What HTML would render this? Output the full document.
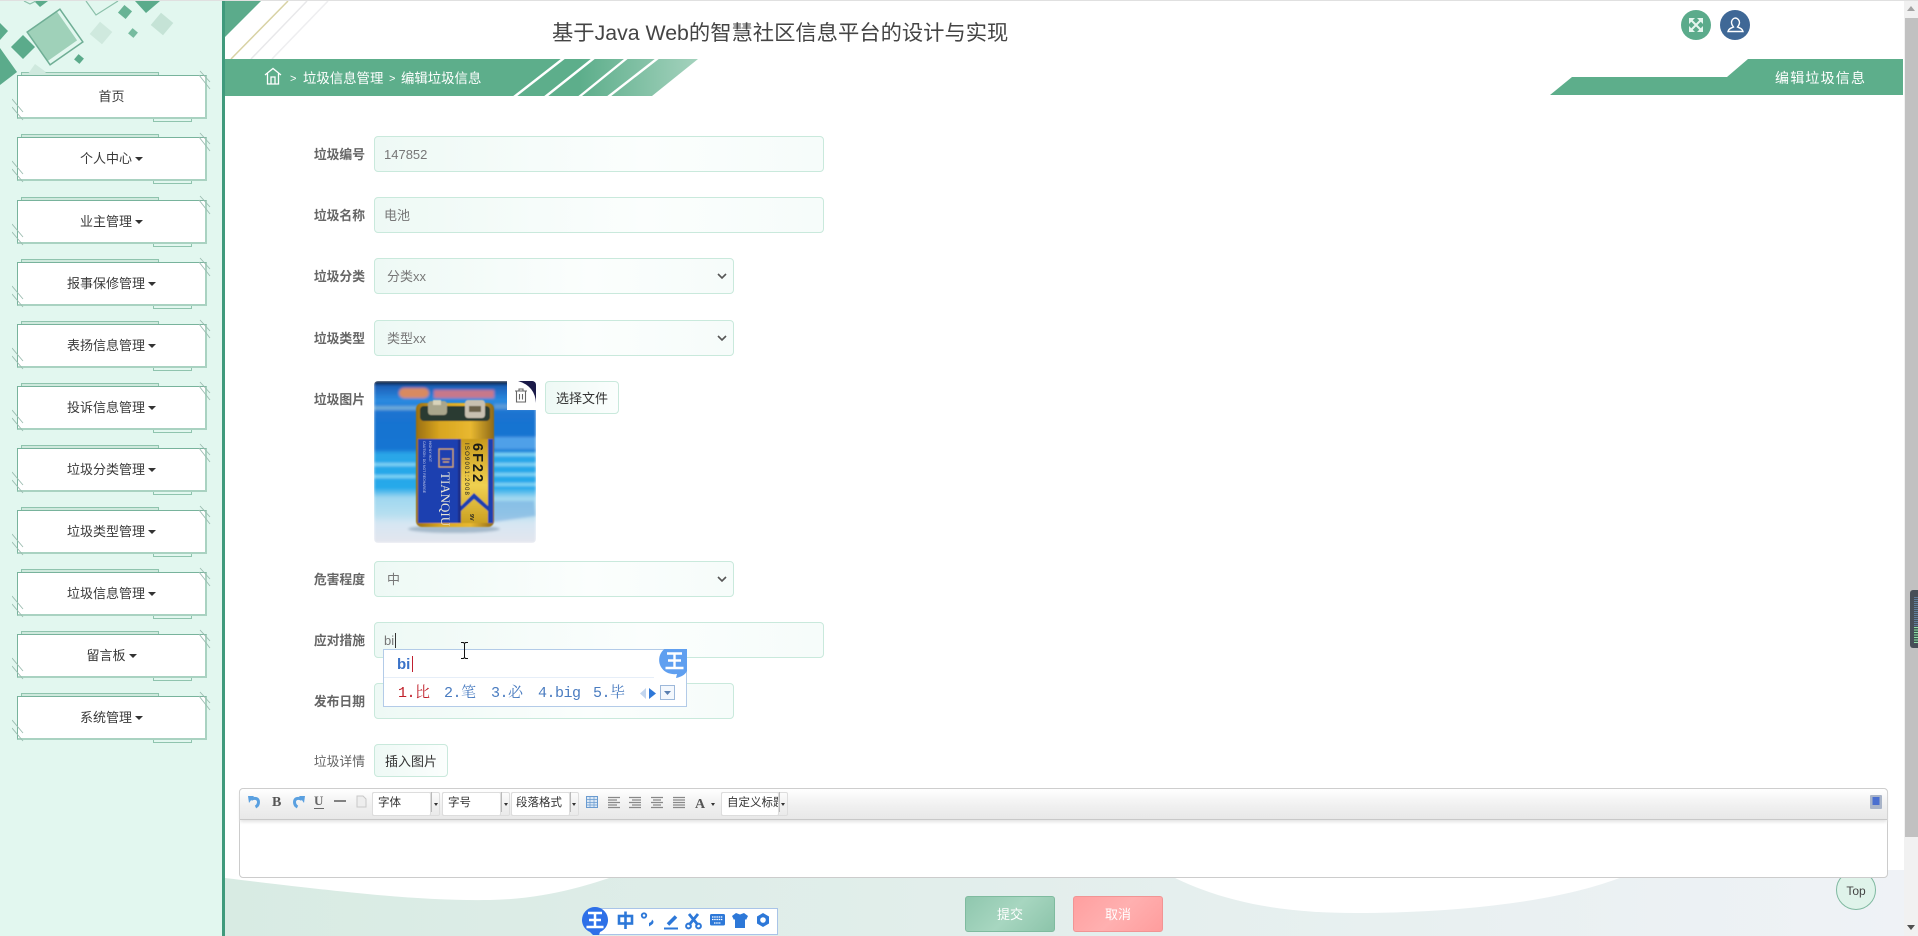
<!DOCTYPE html>
<html lang="zh-CN"><head><meta charset="utf-8"><title>编辑垃圾信息</title>
<style>
*{box-sizing:border-box}
html,body{margin:0;padding:0;width:1918px;height:936px;overflow:hidden;background:#fff}
body{position:relative;font-family:"Liberation Sans","Noto Sans CJK SC",sans-serif;font-size:13px;color:#555}
.a{position:absolute}
#side{left:0;top:0;width:225px;height:936px;background:#e2f7ef;border-right:3px solid #3f9a7c}
.m{position:absolute;left:17px;width:190px;height:44px;background:#fff;border:1px solid #78b39c;border-right:2px solid #a9d2c1;border-bottom:2px solid #a9d2c1;text-align:center;line-height:41px;color:#3a3a3a;font-size:13px;z-index:2}
.mt{position:absolute;left:21px;width:138px;height:4px;border:1px solid #8fc4ae;border-bottom:0;background:#cfe9dd}
.mb{position:absolute;left:153px;width:39px;height:4px;border:1px solid #8fc4ae;border-top:0}
.h{position:absolute;left:12px;width:200px;height:54px;z-index:3;pointer-events:none}
.c{display:inline-block;width:0;height:0;border:4px solid transparent;border-top-color:#333;border-bottom:0;margin-left:3px;vertical-align:2px}
.l{position:absolute;left:300px;width:65px;text-align:right;font-weight:bold;color:#666;line-height:20px;font-size:12.8px}
.i{position:absolute;left:374px;height:36px;border:1px solid #c9e9dc;border-radius:4px;background:linear-gradient(90deg,#eef9f5,#fbfefd 60%,#f6fcfa);color:#777;font-size:13px;line-height:36px;padding-left:9px}
.b{position:absolute;left:374px;width:74px;height:33px;border:1px solid #c9e9dc;border-radius:4px;background:linear-gradient(90deg,#eef9f5,#fbfefd);color:#333;text-align:center;line-height:33px;font-size:13px}
.ch{position:absolute;right:6px;top:14px}
.sel{position:absolute;top:792px;height:24px;border:1px solid #ddd;background:#fff;color:#333;font-size:11.5px;line-height:21px;padding-left:5px;overflow:hidden;white-space:nowrap;border-radius:2px}
.tri{position:absolute;width:0;height:0;border:2.5px solid transparent;border-top:3px solid #333;border-bottom:0}
.cand{position:absolute;top:684px;font-family:"Liberation Mono","Noto Serif CJK SC",monospace;font-size:15px;color:#4a7cc0;line-height:20px;white-space:nowrap;z-index:12;letter-spacing:-.5px}
</style></head><body>
<div class="a" style="left:0;top:0;width:1918px;height:1px;background:#e0e0e0;z-index:20"></div>

<div class="a" id="side"></div>
<svg class="a" style="left:0;top:0;z-index:1" width="222" height="90" viewBox="0 0 222 90">
<g fill="#5bab8b">
<polygon points="0,48 17,72 0,85"/><polygon points="0,23 8,31 0,40"/>
<polygon points="135,1 160,1 146,13"/><polygon points="34,1 48,1 40,7"/>
<rect x="-8.500" y="-8.500" width="17" height="17" transform="translate(23,47) rotate(45)"/>
<rect x="-5" y="-5" width="10" height="10" transform="translate(125,12) rotate(40)" opacity=".9"/>
<rect x="-3.500" y="-3.500" width="7" height="7" transform="translate(79,59) rotate(40)"/>
<rect x="-3.500" y="-3.500" width="7" height="7" transform="translate(133,33) rotate(40)" opacity=".8"/>
</g>
<rect x="-18" y="-18" width="36" height="36" transform="translate(52,36) rotate(55)" fill="#9fd1b9"/>
<rect x="-20" y="-20" width="40" height="40" transform="translate(55,37) rotate(55)" fill="none" stroke="#6fae95" stroke-width="1.500"/>
<rect x="-8" y="-8" width="16" height="16" transform="translate(101,33) rotate(40)" fill="#cfe9de"/>
<rect x="-8" y="-8" width="16" height="16" transform="translate(162,24) rotate(40)" fill="#c5e3d6"/>
<polygon points="25,78 35,64 46,72 40,78" fill="#cfe9de"/>
<polyline points="86,1 96,15 118,1" fill="none" stroke="#8bc0aa" stroke-width="1.200"/>
<polyline points="24,1 30,4 36,1" fill="none" stroke="#8bc0aa" stroke-width="1.200"/>
</svg>

<svg width="0" height="0" style="position:absolute"><defs><g id="hh" stroke="#9bbcb0" stroke-width=".9" fill="none">
<path d="M188,2 L198,13M187,6 L198,20"/><path d="M0,30 L11,43M0,38 L11,51"/></g></defs></svg>

<div class="mt" style="top:72px"></div><div class="m" style="top:75px">首页</div><div class="mb" style="top:118px"></div><svg class="h" style="top:69px"><use href="#hh"/></svg>
<div class="mt" style="top:134px"></div><div class="m" style="top:137px">个人中心<span class="c"></span></div><div class="mb" style="top:180px"></div><svg class="h" style="top:131px"><use href="#hh"/></svg>
<div class="mt" style="top:197px"></div><div class="m" style="top:200px">业主管理<span class="c"></span></div><div class="mb" style="top:243px"></div><svg class="h" style="top:194px"><use href="#hh"/></svg>
<div class="mt" style="top:259px"></div><div class="m" style="top:262px">报事保修管理<span class="c"></span></div><div class="mb" style="top:305px"></div><svg class="h" style="top:256px"><use href="#hh"/></svg>
<div class="mt" style="top:321px"></div><div class="m" style="top:324px">表扬信息管理<span class="c"></span></div><div class="mb" style="top:367px"></div><svg class="h" style="top:318px"><use href="#hh"/></svg>
<div class="mt" style="top:383px"></div><div class="m" style="top:386px">投诉信息管理<span class="c"></span></div><div class="mb" style="top:429px"></div><svg class="h" style="top:380px"><use href="#hh"/></svg>
<div class="mt" style="top:445px"></div><div class="m" style="top:448px">垃圾分类管理<span class="c"></span></div><div class="mb" style="top:491px"></div><svg class="h" style="top:442px"><use href="#hh"/></svg>
<div class="mt" style="top:507px"></div><div class="m" style="top:510px">垃圾类型管理<span class="c"></span></div><div class="mb" style="top:553px"></div><svg class="h" style="top:504px"><use href="#hh"/></svg>
<div class="mt" style="top:569px"></div><div class="m" style="top:572px">垃圾信息管理<span class="c"></span></div><div class="mb" style="top:615px"></div><svg class="h" style="top:566px"><use href="#hh"/></svg>
<div class="mt" style="top:631px"></div><div class="m" style="top:634px">留言板<span class="c"></span></div><div class="mb" style="top:677px"></div><svg class="h" style="top:628px"><use href="#hh"/></svg>
<div class="mt" style="top:693px"></div><div class="m" style="top:696px">系统管理<span class="c"></span></div><div class="mb" style="top:739px"></div><svg class="h" style="top:690px"><use href="#hh"/></svg>

<!-- header art -->
<svg class="a" style="left:225px;top:0" width="500" height="100" viewBox="225 0 500 100">
<defs><linearGradient id="bg1" x1="0" x2="1"><stop offset="0" stop-color="#5dae8b"/><stop offset=".75" stop-color="#5dae8b"/><stop offset="1" stop-color="#a4d2bd"/></linearGradient></defs>
<polygon points="225,1 261,1 225,37" fill="#5bab8b"/>
<path d="M288,1 L231,59" stroke="#d8d2a4" stroke-width="1.500"/>
<path d="M307,1 L251,59" stroke="#e8e8ea" stroke-width="1.500"/>
<path d="M328,1 L272,59" stroke="#eeeef0" stroke-width="1.500"/>
<polygon points="225,59 698,59 652,96 225,96" fill="url(#bg1)"/>
<g stroke="#fff" stroke-width="2.400"><path d="M564,58 L514,97M594,58 L545,97M627,58 L579,97M658,58 L608,97"/></g>
<g fill="none" stroke="#fff" stroke-width="1.300"><path d="M265,75 L273,68.500 L281,75M267.500,73.500 V84 H278.500 V73.500M271,84 V77 H275 V84"/></g>
</svg>
<div class="a" style="left:290px;top:69px;color:#fff;font-size:11px;line-height:20px">&gt;</div>
<div class="a" style="left:303px;top:69px;color:#fff;font-size:13.4px;line-height:20px;white-space:nowrap">垃圾信息管理</div>
<div class="a" style="left:389px;top:69px;color:#fff;font-size:11px;line-height:20px">&gt;</div>
<div class="a" style="left:401px;top:69px;color:#fff;font-size:13.4px;line-height:20px;white-space:nowrap">编辑垃圾信息</div>
<div class="a" style="left:552px;top:17px;font-size:21.3px;line-height:32px;color:#444;white-space:nowrap">基于Java Web的智慧社区信息平台的设计与实现</div>

<svg class="a" style="left:1680px;top:9px" width="72" height="32" viewBox="0 0 72 32">
<circle cx="16" cy="16" r="15" fill="#5bab8b"/><circle cx="55" cy="16" r="15" fill="#3f6896"/>
<g stroke="#e4f5ee" stroke-width="2" fill="none"><path d="M11,11 L21,21M21,11 L11,21"/></g>
<g fill="#e4f5ee"><polygon points="9,9 15,9 9,15"/><polygon points="23,9 17,9 23,15"/><polygon points="9,23 15,23 9,17"/><polygon points="23,23 17,23 23,17"/></g>
<g stroke="#fff" stroke-width="1.400" fill="none"><path d="M55,9 a4.500,4.500 0 0 1 4.500,4.500 c0,2 -1,3.200 -2,4.500 c2,1 5,1.500 5.500,4.500 H48 c.5,-3 3.500,-3.500 5.500,-4.500 c-1,-1.300 -2,-2.500 -2,-4.500 A4.500,4.500 0 0 1 55,9z"/></g>
</svg>
<svg class="a" style="left:1550px;top:59px" width="354" height="37" viewBox="1550 59 354 37"><polygon points="1550,95 1572,77 1727,77 1748,59 1903,59 1903,95" fill="#5dae8b"/></svg>
<div class="a" style="left:1775px;top:67px;color:#fff;font-size:14px;line-height:22px;letter-spacing:1.200px;white-space:nowrap;width:100px">编辑垃圾信息</div>

<!-- form -->
<div class="l" style="top:145px">垃圾编号</div><div class="i" style="top:136px;width:450px">147852</div>
<div class="l" style="top:206px">垃圾名称</div><div class="i" style="top:197px;width:450px">电池</div>
<div class="l" style="top:267px">垃圾分类</div><div class="i" style="top:258px;width:360px;padding-left:12px">分类xx<svg class="ch" width="10" height="7"><path d="M1,1 L5,5 L9,1" fill="none" stroke="#555" stroke-width="1.600"/></svg></div>
<div class="l" style="top:329px">垃圾类型</div><div class="i" style="top:320px;width:360px;padding-left:12px">类型xx<svg class="ch" width="10" height="7"><path d="M1,1 L5,5 L9,1" fill="none" stroke="#555" stroke-width="1.600"/></svg></div>
<div class="l" style="top:390px">垃圾图片</div>

<svg class="a" style="left:374px;top:381px;border-radius:4px" width="162" height="162" viewBox="0 0 162 162">
<defs>
<filter id="bl" x="-10%" y="-10%" width="120%" height="120%"><feGaussianBlur stdDeviation="1.400"/></filter>
<filter id="bs"><feGaussianBlur stdDeviation=".5"/></filter>
<filter id="bt"><feGaussianBlur stdDeviation=".25"/></filter>
<linearGradient id="bgv" x1="0" y1="0" x2="0" y2="1"><stop offset="0" stop-color="#000"/><stop offset=".03" stop-color="#1c5fb8"/><stop offset=".12" stop-color="#2b8be0"/><stop offset=".2" stop-color="#1a73d0"/><stop offset=".42" stop-color="#1774d2"/><stop offset=".45" stop-color="#29a6e8"/><stop offset=".66" stop-color="#26a9ea"/><stop offset=".72" stop-color="#9fd7f0"/><stop offset=".82" stop-color="#b5dff0"/><stop offset=".88" stop-color="#d6e6f3"/><stop offset="1" stop-color="#e4e6ee"/></linearGradient>
<linearGradient id="gold" x1="0" x2="1"><stop offset="0" stop-color="#9a6f10"/><stop offset=".3" stop-color="#d8a520"/><stop offset=".7" stop-color="#e8b830"/><stop offset="1" stop-color="#8f6a18"/></linearGradient>
<linearGradient id="gs" x1="0" y1="0" x2="0" y2="1"><stop offset="0" stop-color="#c89a1c"/><stop offset=".55" stop-color="#f0d050"/><stop offset="1" stop-color="#caa022"/></linearGradient>
</defs>
<g filter="url(#bl)">
<rect width="162" height="162" fill="url(#bgv)"/>
<rect x="25" y="7" width="30" height="10" rx="5" fill="#d98a60"/><rect x="60" y="9" width="60" height="8" fill="#c7788a"/>
<rect x="0" y="25" width="50" height="4" fill="#6aa8d8"/><rect x="120" y="23" width="42" height="5" fill="#5a9ad8"/>
<rect x="120" y="56" width="42" height="12" fill="#4fa0e8"/>
<g fill="#7fd4f4"><rect x="120" y="72" width="42" height="3"/><rect x="120" y="82" width="42" height="3"/><rect x="120" y="92" width="42" height="3"/><rect x="120" y="102" width="42" height="3"/><rect x="0" y="82" width="42" height="3"/><rect x="0" y="94" width="42" height="3"/></g>
<polygon points="113,120 160,120 162,135 113,142" fill="#6aa5dc" opacity=".5"/>
<ellipse cx="80" cy="148" rx="46" ry="4" fill="#8ea7bb" opacity=".7"/>
</g>
<g filter="url(#bs)">
<rect x="42" y="22" width="78" height="124" rx="6" fill="url(#gold)"/>
<rect x="46" y="25" width="70" height="15" rx="4" fill="#2b3a30"/>
<rect x="54" y="20" width="19" height="14" rx="3" fill="#a9a68c"/><rect x="59" y="19" width="8" height="5" fill="#d9d3b9"/>
<rect x="91" y="19" width="20" height="18" rx="3" fill="#c8c0b0"/><rect x="95" y="25" width="12" height="6" fill="#6a6048"/>
<rect x="44" y="58" width="40" height="84" fill="#1a3fb0"/>
<rect x="84" y="58" width="3" height="84" fill="#1d2f88"/>
<rect x="87" y="58" width="27" height="84" fill="url(#gs)"/>
<rect x="114" y="58" width="5" height="84" fill="#1a3fb0"/>
<polygon points="87,130 100,118 114,130 114,125 100,112 87,125" fill="#1a3fb0"/>
<rect x="65" y="68" width="14" height="18" fill="#1a3fb0" stroke="#d8b040" stroke-width="1"/>
<path d="M68,78 H76M69,81 H75" stroke="#d8b040"/>
</g>
<g filter="url(#bt)">
<text transform="translate(99,62) rotate(90)" font-family="Liberation Sans,sans-serif" font-weight="bold" font-size="14.500" fill="#1a1a18" letter-spacing="2">6F22</text>
<text transform="translate(91,62) rotate(90)" font-family="Liberation Sans,sans-serif" font-size="6" fill="#222" letter-spacing="1.200">ISO9001:2008</text>
<text transform="translate(67,91) rotate(90)" font-family="Liberation Serif,serif" font-size="13" fill="#e9e6d6">TIANQIU</text>
<text transform="translate(49,60) rotate(90)" font-family="Liberation Sans,sans-serif" font-size="3.500" fill="#c0c8e8">CAUTION: DO NOT RECHARGE</text>
<text transform="translate(55,60) rotate(90)" font-family="Liberation Sans,sans-serif" font-size="3.500" fill="#c0c8e8">HIGHLY HOT</text>
<text transform="translate(96,133) rotate(90)" font-family="Liberation Sans,sans-serif" font-size="5.500" font-weight="bold" fill="#222">9V</text>
</g>
<path d="M133,0 H162 V29 H133z" fill="#1a1a48"/>
<path d="M133,0 H144 Q161,5 162,22 V29 H133z" fill="#fff"/>
</svg>
<svg class="a" style="left:514px;top:388px" width="14" height="15" viewBox="0 0 14 15"><g fill="none" stroke="#666" stroke-width="1.100"><path d="M1,3 H13M5,3 V1 H9 V3M2.500,3 V14 H11.500 V3M5.500,6 V11.500M8.500,6 V11.500"/></g></svg>
<div class="b" style="left:545px;top:381px">选择文件</div>

<div class="l" style="top:570px">危害程度</div><div class="i" style="top:561px;width:360px;padding-left:12px">中<svg class="ch" width="10" height="7"><path d="M1,1 L5,5 L9,1" fill="none" stroke="#555" stroke-width="1.600"/></svg></div>
<div class="l" style="top:631px">应对措施</div><div class="i" style="top:622px;width:450px">bi<span style="display:inline-block;width:1px;height:15px;background:#333;vertical-align:-3px;margin-left:1px"></span></div>
<div class="l" style="top:692px">发布日期</div><div class="i" style="top:683px;width:360px"></div>
<div class="l" style="top:752px;font-weight:normal">垃圾详情</div><div class="b" style="top:744px">插入图片</div>

<!-- footer bg -->
<svg class="a" style="left:225px;top:870px" width="1679" height="66" viewBox="225 870 1679 66">
<defs><linearGradient id="fb" x1="0" x2="1"><stop offset="0" stop-color="#d8ebe3"/><stop offset="1" stop-color="#eff2f6"/></linearGradient></defs>
<rect x="225" y="870" width="1679" height="66" fill="url(#fb)"/>
<path d="M225,870 V878 C350,893 420,901 490,900 C540,899 580,888 612,877 V870Z" fill="#fff"/>
<path d="M1173,877 C1230,905 1290,913 1355,913 C1440,913 1550,905 1622,877Z" fill="#fff"/>
</svg>

<!-- top button -->
<div class="a" style="left:1836px;top:870px;width:40px;height:40px;border-radius:50%;background:#dff3ea;border:1px solid #7fb9a0;text-align:center;line-height:41px;font-size:12px;color:#444">Top</div>

<!-- editor -->
<div class="a" style="left:239px;top:788px;width:1649px;height:90px;background:#fff;border:1px solid #ccc;border-radius:4px;z-index:5">
<div style="height:31px;background:linear-gradient(180deg,#fff,#f0f0f0 55%,#e8e8e8);border-bottom:1px solid #c8c8c8;box-shadow:0 2px 3px #e4e4e4;border-radius:4px 4px 0 0"></div></div>
<svg class="a" style="left:239px;top:788px;z-index:6" width="130" height="31" viewBox="239 788 130 31">
<g fill="none" stroke="#5aa0e0" stroke-width="3"><path d="M251,799.500 c3,-2 7.500,-1.500 7.500,2.500 c0,2 -1,4 -3,5"/></g><polygon points="248,796 254,796 249,803" fill="#5aa0e0"/>
<text x="272" y="806" font-family="Liberation Serif,serif" font-weight="bold" font-size="14" fill="#555">B</text>
<g fill="none" stroke="#5aa0e0" stroke-width="3"><path d="M302,799.500 c-3,-2 -7.500,-1.500 -7.500,2.500 c0,2 1,4 3,5"/></g><polygon points="305,796 299,796 304,803" fill="#5aa0e0"/>
<text x="314" y="805" font-family="Liberation Serif,serif" font-weight="bold" font-size="13" fill="#666">U</text><path d="M314,808.500 H324" stroke="#666" stroke-width="1"/>
<path d="M334,801 H346" stroke="#444" stroke-width="1.300"/>
<path d="M357,796 H363 L366,799 V807 H357z" fill="#eee" stroke="#c8c8c8"/>
</svg>
<div class="sel" style="left:372px;width:59px;z-index:6">字体</div><div class="a" style="left:431px;top:792px;width:1px;height:20px;background:#bbb;z-index:7"></div>
<div class="a" style="left:372px;top:792px;width:68px;height:24px;border:1px solid #ddd;z-index:6;border-radius:2px"></div><span class="tri" style="left:434px;top:803px;z-index:7"></span>
<div class="sel" style="left:442px;width:59px;z-index:6">字号</div><div class="a" style="left:501px;top:792px;width:1px;height:20px;background:#bbb;z-index:7"></div>
<div class="a" style="left:442px;top:792px;width:68px;height:24px;border:1px solid #ddd;z-index:6;border-radius:2px"></div><span class="tri" style="left:504px;top:803px;z-index:7"></span>
<div class="sel" style="left:511px;width:59px;z-index:6;padding-left:4px">段落格式</div><div class="a" style="left:570px;top:792px;width:1px;height:20px;background:#bbb;z-index:7"></div>
<div class="a" style="left:511px;top:792px;width:68px;height:24px;border:1px solid #ddd;z-index:6;border-radius:2px"></div><span class="tri" style="left:572px;top:803px;z-index:7"></span>
<svg class="a" style="left:585px;top:795px;z-index:6" width="125" height="16" viewBox="585 795 125 16">
<rect x="586.500" y="796.500" width="11" height="11" fill="#dbe8f5" stroke="#6a9bd0"/><path d="M586,799.500 H598M586,802.500 H598M586,805 H598M590,797 V808M594,797 V808" stroke="#6a9bd0" stroke-width=".7"/>
<g stroke="#888" stroke-width="1.300"><path d="M608,797.500 H620M608,800 H617M608,802.500 H620M608,805 H617M608,807.500 H620"/><path d="M629,797.500 H641M632,800 H641M629,802.500 H641M632,805 H641M629,807.500 H641"/><path d="M651,797.500 H663M653,800 H661M651,802.500 H663M653,805 H661M651,807.500 H663"/><path d="M673,797.500 H685M673,800 H685M673,802.500 H685M673,805 H685M673,807.500 H685"/></g>
<text x="695" y="808" font-family="Liberation Serif,serif" font-weight="bold" font-size="14" fill="#555">A</text>
</svg>
<span class="tri" style="left:711px;top:803px;z-index:7"></span>
<div class="sel" style="left:721px;width:58px;z-index:6;padding-left:5px">自定义标题</div><div class="a" style="left:779px;top:792px;width:1px;height:20px;background:#bbb;z-index:7"></div>
<div class="a" style="left:721px;top:792px;width:67px;height:24px;border:1px solid #ddd;z-index:6;border-radius:2px"></div><span class="tri" style="left:781px;top:803px;z-index:7"></span>
<svg class="a" style="left:1870px;top:795px;z-index:6" width="12" height="14"><rect x="0" y="0" width="12" height="14" rx="1" fill="#a9b4c8"/><rect x="2.500" y="2" width="7" height="8" fill="#4a6fd0"/></svg>

<!-- buttons -->
<div class="a" style="left:965px;top:896px;width:90px;height:36px;background:linear-gradient(135deg,#8fc7ae,#a7d6c0 50%,#8cc4aa);border:1px solid #7fbb9f;border-radius:3px;color:#fff;text-align:center;line-height:36px">提交</div>
<div class="a" style="left:1073px;top:896px;width:90px;height:36px;background:linear-gradient(135deg,#ff9f9f,#ffb0b0 50%,#ff9d9d);border:1px solid #f29494;border-radius:3px;color:#fff;text-align:center;line-height:36px">取消</div>

<!-- IME popup -->
<div class="a" style="left:383px;top:649px;width:304px;height:58px;background:#fff;border:1px solid #b3cbe8;z-index:10"></div>
<div class="a" style="left:384px;top:677px;width:270px;height:1px;background:#e6eef8;z-index:11"></div>
<div class="a" style="left:397px;top:655px;color:#3a72c8;font-weight:bold;font-size:15px;line-height:20px;z-index:11">bi</div>
<div class="a" style="left:412px;top:656px;width:1px;height:16px;background:#c02030;z-index:11"></div>
<div class="cand" style="left:398px;color:#c0202a">1.比</div>
<div class="cand" style="left:444px">2.笔</div>
<div class="cand" style="left:491px">3.必</div>
<div class="cand" style="left:538px">4.big</div>
<div class="cand" style="left:593px">5.毕</div>
<svg class="a" style="left:636px;top:684px;z-index:12" width="42" height="18" viewBox="636 684 42 18">
<polygon points="646,688 640,693.500 646,699" fill="#c2d5ee"/><polygon points="649,688 656,693.500 649,699" fill="#2f78d8"/>
<rect x="660.500" y="685.500" width="14" height="14" fill="#f4f8fd" stroke="#9db8da"/><polygon points="664,691 671,691 667.500,695" fill="#5a7fb0"/>
</svg>
<svg class="a" style="left:655px;top:645px;z-index:13" width="33" height="36" viewBox="655 645 33 36">
<defs><clipPath id="cp"><rect x="655" y="649" width="32" height="32"/></clipPath></defs>
<g clip-path="url(#cp)"><path d="M673,646 a14,14 0 0 0 -12,21 c3,5 9,8 16,7 l-1,4 c5,-1 9,-3 11,-7 V646z" fill="#5f9ff0"/></g>
<path d="M667,653.500 H682M668,660.500 H681M665.500,668 H683.500M674.500,653.500 V668" stroke="#fff" stroke-width="2.400" fill="none"/>
</svg>
<!-- I-beam -->
<svg class="a" style="left:460px;top:642px;z-index:14" width="9" height="17"><path d="M1,.5 H3.500 L4.500,1.500 L5.500,.5 H8M4.500,1.500 V15.500M1,16.500 H3.500 L4.500,15.500 L5.500,16.500 H8" fill="none" stroke="#111" stroke-width="1"/></svg>

<!-- IME bar -->
<div class="a" style="left:596px;top:908px;width:182px;height:27px;background:#fff;border:1px solid #a9c4e8;z-index:10"></div>
<svg class="a" style="left:580px;top:905px;z-index:11" width="200" height="31" viewBox="580 905 200 31">
<path d="M595,907 a13,13 0 0 0 -5,25 l3,3 h6 l1,-3 a13,13 0 0 0 -5,-25z" fill="#2e70e8"/>
<path d="M588,913 H602M589,920 H601M586.500,927 H603.500M595,913 V927" stroke="#fff" stroke-width="2.500" fill="none"/>
<g fill="none" stroke="#2d78d8" stroke-width="2.600">
<rect x="619" y="916" width="13" height="7.500"/><path d="M625.500,911.500 V929"/>
<circle cx="644" cy="915.500" r="2.200" stroke-width="1.900"/>
<path d="M664,928.500 H678" stroke-width="2"/>
<path d="M668,924.500 L676,916.500" stroke-width="3.600"/>
<path d="M689,914 L698,925M698,914 L689,925" stroke-width="2.800"/>
<circle cx="688.500" cy="926" r="2.400" stroke-width="2"/><circle cx="698.500" cy="926" r="2.400" stroke-width="2"/>
</g>
<path d="M649,923 q3,-1 3,-3.500 q3,2.500 0,5 l-3,2z" fill="#2d78d8"/>
<rect x="710" y="914" width="15" height="11.500" rx="1.500" fill="#2d78d8"/>
<path d="M712,917 H723M712,919.500 H723M714,923 H721" stroke="#fff" stroke-width="1.200" stroke-dasharray="1.500 .7"/>
<path d="M736,913 L740,914.500 L744,913 L748,916 L746,920 L745,919 V928 H735 V919 L734,920 L732,916z" fill="#2d78d8"/>
<path d="M763,913 L769,916.500 V923.500 L763,927 L757,923.500 V916.500z" fill="#2d78d8"/><circle cx="763" cy="920" r="2.800" fill="#fff"/>
</svg>

<!-- scrollbar -->
<div class="a" style="left:1904px;top:1px;width:14px;height:935px;background:#f1f1f1;z-index:15"></div>
<div class="a" style="left:1905px;top:18px;width:13px;height:819px;background:#c1c1c1;z-index:16"></div>
<svg class="a" style="left:1904px;top:0;z-index:17" width="14" height="936" viewBox="0 0 14 936"><polygon points="7,6 11,11 3,11" fill="#a3a3a3"/><polygon points="3,925 11,925 7,930" fill="#505050"/></svg>
<div class="a" style="left:1910px;top:590px;width:8px;height:58px;background:#474f58;border-radius:3px 0 0 3px;z-index:18"></div>
<div class="a" style="left:1914px;top:597px;width:4px;height:30px;background:repeating-linear-gradient(180deg,#5f7d9a 0 1px,#474f58 1px 2px);z-index:19"></div>
<div class="a" style="left:1914px;top:627px;width:4px;height:16px;background:repeating-linear-gradient(180deg,#8fe0a8 0 1px,#3f5a52 1px 2.500px);z-index:19"></div>
</body></html>
